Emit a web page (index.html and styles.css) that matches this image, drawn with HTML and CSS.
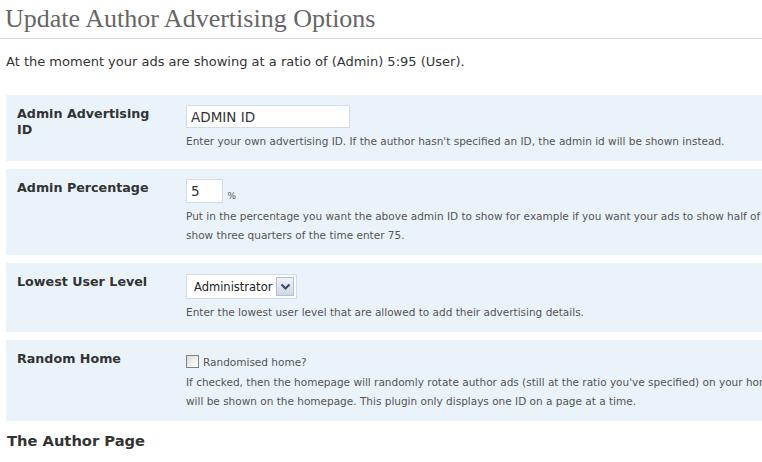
FILE: index.html
```html
<!DOCTYPE html>
<html lang="en">
<head>
    <meta charset="UTF-8">
    <title>Update Author Advertising Options</title>
    <link rel="stylesheet" href="styles.css">
</head>
<body>

    <div class="wrap">
        <h2>Update Author Advertising Options</h2>
        <p class="ratio">At the moment your ads are showing at a ratio of (Admin) 5:95 (User).</p>

        <table class="form-table">
            <tr>
                <th>Admin Advertising ID</th>
                <td>
                    <input type="text" class="input-id" value="ADMIN ID">
                    <p class="desc">Enter your own advertising ID. If the author hasn't specified an ID, the admin id will be shown instead.</p>
                </td>
            </tr>
            <tr>
                <th>Admin Percentage</th>
                <td>
                    <input type="text" class="input-pc" value="5"> <span class="pc">%</span>
                    <p class="desc">Put in the percentage you want the above admin ID to show for example if you want your ads to show half of the time enter 50, if you want them to<br>show three quarters of the time enter 75.</p>
                </td>
            </tr>
            <tr>
                <th>Lowest User Level</th>
                <td>
                    <div class="select">
                        <span class="select-value">Administrator</span>
                        <span class="select-btn">
                            <svg width="11" height="8" viewBox="0 0 11 8"><path d="M1.5 1.5 L5.5 5.5 L9.5 1.5" fill="none" stroke="#3b4c6e" stroke-width="2.2"/></svg>
                        </span>
                    </div>
                    <p class="desc">Enter the lowest user level that are allowed to add their advertising details.</p>
                </td>
            </tr>
            <tr>
                <th>Random Home</th>
                <td>
                    <label class="check"><input type="checkbox"> Randomised home?</label>
                    <p class="desc">If checked, then the homepage will randomly rotate author ads (still at the ratio you've specified) on your homepage, otherwise only the admin ID<br>will be shown on the homepage. This plugin only displays one ID on a page at a time.</p>
                </td>
            </tr>
        </table>

        <h3>The Author Page</h3>
    </div>

</body>
</html>
```

FILE: styles.css
```css
body {
    margin: 0;
    font-family: "DejaVu Sans", Verdana, sans-serif;
    color: #333;
    background-color: #fff;
    overflow: hidden;
}

.wrap {
    width: 1100px;
}

h2 {
    margin: 0;
    padding: 4px 5px;
    font-family: "Liberation Serif", Georgia, serif;
    font-size: 26px;
    font-weight: normal;
    line-height: 30px;
    color: #666;
    border-bottom: 1px solid #dadada;
}

.ratio {
    margin: 14px 0 0 6px;
    font-size: 13px;
    line-height: 18px;
}

.form-table {
    margin: 16px 0 0 6px;
    width: 1050px;
    border-collapse: separate;
    border-spacing: 0 8px;
}

.form-table tr {
    background-color: #eaf3fa;
}

.form-table th {
    width: 149px;
    padding: 11px 10px 10px 11px;
    text-align: left;
    vertical-align: top;
    font-size: 12.7px;
    line-height: 16px;
    color: #333;
}

.form-table td {
    padding: 10px;
    vertical-align: top;
    font-size: 11px;
}

.desc {
    margin: 4px 0 0;
    font-size: 10.5px;
    line-height: 19px;
    color: #555;
    white-space: nowrap;
}

input[type="text"] {
    box-sizing: border-box;
    margin: 0;
    padding: 2px 4px;
    font-family: inherit;
    font-size: 13.5px;
    color: #333;
    border: 1px solid #d1dce7;
    background-color: #fff;
    vertical-align: middle;
}

.input-id {
    width: 164px;
    height: 23px;
    margin-top: 1px;
}

.input-pc {
    width: 37px;
    height: 24px;
}

.pc {
    font-size: 9px;
    color: #555;
    vertical-align: -5px;
    margin-left: 1px;
}

.select {
    display: flex;
    align-items: center;
    justify-content: space-between;
    box-sizing: border-box;
    width: 111px;
    height: 25px;
    margin-top: 1px;
    padding: 0 2px 0 7px;
    background-color: #fff;
    border: 1px solid #d1dce7;
    font-size: 11.5px;
    color: #222;
}

.select-btn {
    display: flex;
    align-items: center;
    justify-content: center;
    box-sizing: border-box;
    width: 18px;
    height: 19px;
    border: 1px solid #b2c0d6;
    background: linear-gradient(#f0f3f8, #cdd7e6);
}

.check {
    display: flex;
    align-items: center;
    height: 15px;
    padding-top: 4px;
    font-size: 10.5px;
    color: #555;
}

.check input {
    appearance: none;
    box-sizing: border-box;
    width: 13px;
    height: 13px;
    margin: 0 4px 0 0;
    border: 1px solid #7d8287;
    background: linear-gradient(135deg, #dcdcd7, #fff);
}

h3 {
    margin: 2px 0 0 7px;
    font-size: 14.7px;
    line-height: 20px;
    color: #333;
}
```
